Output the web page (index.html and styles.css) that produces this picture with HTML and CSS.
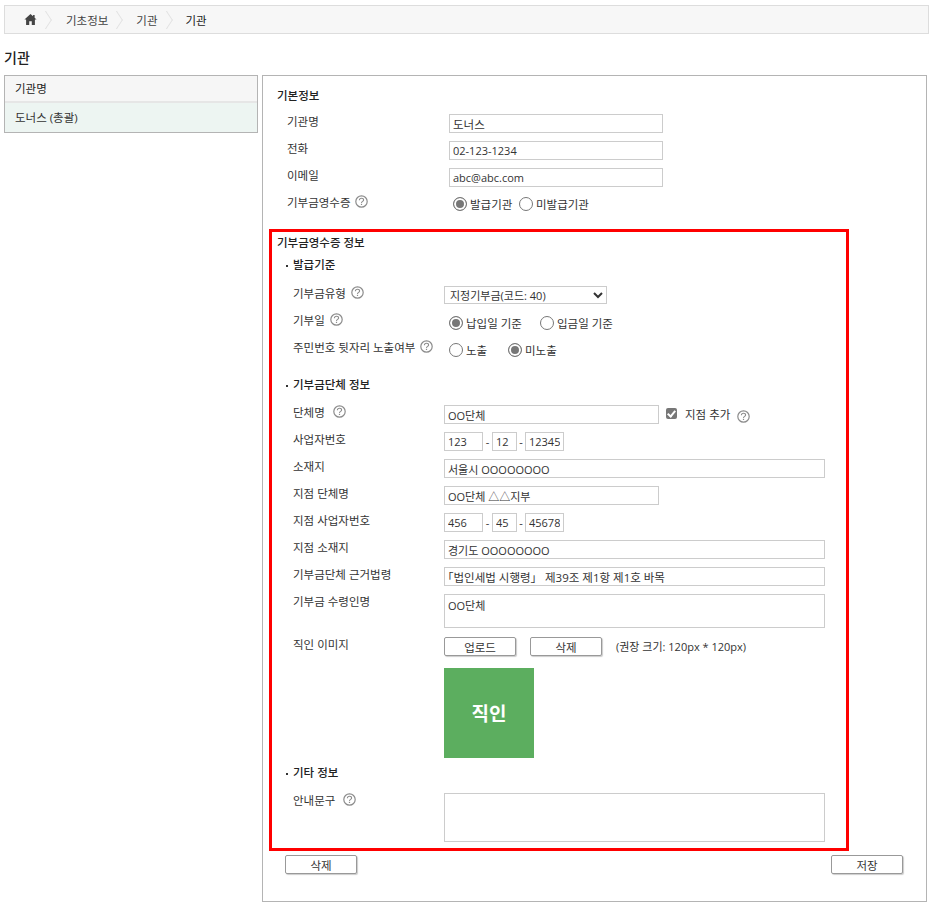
FILE: index.html
```html
<!DOCTYPE html>
<html lang="ko">
<head>
  <meta charset="UTF-8">
  <meta name="viewport" content="width=device-width, initial-scale=1.0">
  <title>기관</title>
  <link rel="stylesheet" href="styles.css">
</head>
<body>
  <svg width="0" height="0" class="defs">
    <symbol id="help" viewBox="0 0 13 13">
      <circle cx="6.5" cy="6.5" r="5.7" fill="none" stroke="#8c8c8c" stroke-width="1.2"/>
      <path d="M4.4 5.2C4.4 3.9 5.3 3.2 6.5 3.2S8.6 3.9 8.6 5C8.6 6.4 6.5 6.4 6.5 8" fill="none" stroke="#8c8c8c" stroke-width="1.1"/>
      <rect x="5.9" y="8.8" width="1.2" height="1.2" fill="#8c8c8c"/>
    </symbol>
  </svg>

  <div class="breadcrumb">
    <svg class="home" viewBox="0 0 14 12"><path d="M7 0L0.4 6H2.2V12H5.6V8H8.4V12H11.8V6H13.6L11.5 4.1V1H9.8V2.5Z" fill="#444"/></svg>
    <span class="crumb-sep"></span>
    <span class="crumb">기초정보</span>
    <span class="crumb-sep"></span>
    <span class="crumb">기관</span>
    <span class="crumb-sep"></span>
    <span class="crumb current">기관</span>
  </div>

  <h1 class="page-title">기관</h1>

  <div class="layout">
    <div class="side">
      <div class="side-head">기관명</div>
      <div class="side-item">도너스 (총괄)</div>
    </div>

    <div class="main">
      <div class="basic">
        <h2 class="sec-title">기본정보</h2>
        <div class="row">
          <div class="lbl">기관명</div>
          <input class="txt w214 ko" type="text" value="도너스">
        </div>
        <div class="row">
          <div class="lbl">전화</div>
          <input class="txt w214" type="text" value="02-123-1234">
        </div>
        <div class="row">
          <div class="lbl">이메일</div>
          <input class="txt w214" type="text" value="abc@abc.com">
        </div>
        <div class="row">
          <div class="lbl">기부금영수증 <svg class="help"><use href="#help"/></svg></div>
          <div class="radios">
            <label class="radio on tight">발급기관</label>
            <label class="radio">미발급기관</label>
          </div>
        </div>
      </div>

      <div class="receipt">
        <h2 class="sec-title">기부금영수증 정보</h2>

        <h3 class="sub-title">발급기준</h3>
        <div class="row">
          <div class="lbl">기부금유형 <svg class="help"><use href="#help"/></svg></div>
          <select class="sel"><option>지정기부금(코드: 40)</option></select>
        </div>
        <div class="row">
          <div class="lbl">기부일 <svg class="help"><use href="#help"/></svg></div>
          <div class="radios pad">
            <label class="radio on wide">납입일 기준</label>
            <label class="radio">입금일 기준</label>
          </div>
        </div>
        <div class="row">
          <div class="lbl">주민번호 뒷자리 노출여부 <svg class="help"><use href="#help"/></svg></div>
          <div class="radios pad">
            <label class="radio narrow">노출</label>
            <label class="radio on">미노출</label>
          </div>
        </div>

        <h3 class="sub-title second">기부금단체 정보</h3>
        <div class="row">
          <div class="lbl">단체명 &nbsp;<svg class="help"><use href="#help"/></svg></div>
          <input class="txt w215" type="text" value="OO단체">
          <span class="check"></span>
          <span class="check-text">지점 추가</span>
          <svg class="help"><use href="#help"/></svg>
        </div>
        <div class="row">
          <div class="lbl">사업자번호</div>
          <input class="txt w39" type="text" value="123">
          <span class="dash">-</span>
          <input class="txt w25" type="text" value="12">
          <span class="dash">-</span>
          <input class="txt w39" type="text" value="12345">
        </div>
        <div class="row">
          <div class="lbl">소재지</div>
          <input class="txt w381" type="text" value="서울시 OOOOOOOO">
        </div>
        <div class="row">
          <div class="lbl">지점 단체명</div>
          <input class="txt w215" type="text" value="OO단체 △△지부">
        </div>
        <div class="row">
          <div class="lbl">지점 사업자번호</div>
          <input class="txt w39" type="text" value="456">
          <span class="dash">-</span>
          <input class="txt w25" type="text" value="45">
          <span class="dash">-</span>
          <input class="txt w39" type="text" value="45678">
        </div>
        <div class="row">
          <div class="lbl">지점 소재지</div>
          <input class="txt w381" type="text" value="경기도 OOOOOOOO">
        </div>
        <div class="row">
          <div class="lbl">기부금단체 근거법령</div>
          <input class="txt w381 ko law" type="text" value="「법인세법 시행령」 제39조 제1항 제1호 바목">
        </div>
        <div class="row tall">
          <div class="lbl">기부금 수령인명</div>
          <textarea class="area h34">OO단체</textarea>
        </div>
        <div class="row btns">
          <div class="lbl">직인 이미지</div>
          <button class="btn" type="button">업로드</button>
          <button class="btn gap" type="button">삭제</button>
          <span class="hint">(권장 크기: 120px * 120px)</span>
        </div>
        <div class="stamp">직인</div>

        <h3 class="sub-title third">기타 정보</h3>
        <div class="row tall last">
          <div class="lbl">안내문구 &nbsp;<svg class="help"><use href="#help"/></svg></div>
          <textarea class="area h49"></textarea>
        </div>
      </div>

      <div class="actions">
        <button class="btn" type="button">삭제</button>
        <button class="btn" type="button">저장</button>
      </div>
    </div>
  </div>
</body>
</html>
```

FILE: styles.css
```css
* {
  box-sizing: border-box;
}

body {
  margin: 0;
  padding: 5px 3px 0 4px;
  background: #fff;
  color: #333;
  font-family: "Open Sans", "Noto Sans CJK KR", sans-serif;
  font-size: 11.5px;
}

.defs {
  position: absolute;
}

.breadcrumb {
  height: 29px;
  display: flex;
  align-items: center;
  padding-left: 19px;
  background: #f7f7f7;
  border: 1px solid #ddd;
}

.home {
  width: 13px;
  height: 11px;
}

.crumb {
  color: #444;
}

.crumb.current {
  color: #222;
}

.crumb-sep {
  width: 18px;
  height: 18px;
  margin: 0 7px 0 4px;
  position: relative;
  overflow: hidden;
  flex: none;
}

.crumb + .crumb-sep {
  margin-right: 6px;
}

.crumb-sep::after {
  content: "";
  position: absolute;
  left: -4px;
  top: 2px;
  width: 13px;
  height: 13px;
  border-top: 1px solid #e2e2e2;
  border-right: 1px solid #e2e2e2;
  transform: rotate(45deg) skew(12deg, 12deg);
}

.page-title {
  margin: 15px 0 8px;
  height: 18px;
  line-height: 18px;
  font-size: 14px;
  font-weight: 500;
  color: #222;
}

.layout {
  display: flex;
  align-items: flex-start;
  gap: 4px;
}

.side {
  width: 254px;
  border: 1px solid #b4b4b4;
}

.side-head {
  height: 27px;
  line-height: 25px;
  padding-left: 10px;
  background: #f6f6f6;
  border-bottom: 2px solid #e6e6e6;
  color: #222;
}

.side-item {
  height: 29px;
  line-height: 29px;
  padding-left: 10px;
  background: #edf5f2;
}

.main {
  width: 665px;
  height: 827px;
  border: 1px solid #b4b4b4;
  padding: 11px 23px 0 6px;
}

.basic {
  padding-left: 8px;
}

.sec-title {
  margin: 0;
  height: 18px;
  line-height: 18px;
  font-size: 11.5px;
  font-weight: 500;
  color: #222;
}

.receipt .sec-title {
  margin-bottom: 1px;
}

.row {
  display: flex;
  align-items: flex-start;
  height: 27px;
}

.basic .row {
  padding-left: 10px;
}

.basic .sec-title {
  margin-bottom: 9px;
}

.lbl {
  width: 151px;
  height: 19px;
  margin-top: -3px;
  display: flex;
  align-items: center;
  gap: 2px;
  white-space: pre-wrap;
  flex: none;
}

.basic .lbl {
  width: 162px;
}

.help {
  width: 13px;
  height: 13px;
  flex: none;
}

.txt {
  height: 19px;
  padding: 0 3px;
  border: 1px solid #ccc;
  background: #fff;
  color: #333;
  font: inherit;
  font-size: 11px;
  outline: none;
}

.txt.ko {
  font-size: 11.5px;
}

.txt.law {
  padding-left: 0;
  text-indent: -3px;
}

.w214 {
  width: 214px;
}

.w215 {
  width: 215px;
}

.w39 {
  width: 39px;
}

.w25 {
  width: 25px;
}

.w381 {
  width: 381px;
}

.sel {
  width: 163px;
  height: 18px;
  padding: 0 0 0 1px;
  border: 1px solid #ccc;
  background: #fff;
  color: #333;
  font: inherit;
  font-size: 11px;
}

.radios {
  display: flex;
  align-items: center;
  height: 19px;
}

.basic .radios {
  margin-top: -1px;
  padding-left: 4px;
}

.radios.pad {
  padding-left: 5px;
}

.radio {
  display: flex;
  align-items: center;
  gap: 3px;
}

.radio::before {
  content: "";
  width: 12px;
  height: 12px;
  border: 1px solid #777;
  border-radius: 50%;
  background: #fff;
  flex: none;
}

.radio.on::before {
  background: #777;
  box-shadow: inset 0 0 0 2px #fff;
}

.radio.tight {
  width: 66px;
}

.radio.wide {
  width: 91px;
}

.radio.narrow {
  width: 59px;
}

.receipt {
  width: 580px;
  height: 622px;
  margin-top: 7px;
  padding: 2px 0 0 5px;
  border: 3px solid #f00;
}

.sub-title {
  margin: 6px 0 14px 9px;
  height: 14px;
  line-height: 14px;
  font-size: 11.5px;
  font-weight: 500;
  color: #222;
}

.sub-title::before {
  content: "";
  display: inline-block;
  width: 2px;
  height: 2px;
  margin: 0 5px 2px 0;
  background: #333;
}

.sub-title.second {
  margin-top: 11px;
  margin-bottom: 13px;
}

.sub-title.third {
  margin-top: 8px;
  margin-bottom: 13px;
}

.receipt .row {
  padding-left: 16px;
}

.dash {
  width: 9px;
  font-size: 11px;
  text-align: center;
  line-height: 19px;
}

.dash + .w25 + .dash {
  width: 8px;
}

.check {
  width: 11px;
  height: 11px;
  margin: 3px 8px 0 7px;
  border-radius: 2px;
  background: #777;
  position: relative;
  flex: none;
}

.check::after {
  content: "";
  position: absolute;
  left: 3px;
  top: 1px;
  width: 3px;
  height: 6px;
  border-right: 2px solid #fff;
  border-bottom: 2px solid #fff;
  transform: rotate(40deg);
}

.check-text {
  line-height: 19px;
  margin-right: 7px;
}

.row .check-text + .help {
  margin-top: 5px;
}

.area {
  width: 381px;
  padding: 2px 3px;
  border: 1px solid #ccc;
  background: #fff;
  color: #333;
  font: inherit;
  font-size: 11px;
  resize: none;
  outline: none;
}

.h34 {
  height: 34px;
}

.h49 {
  height: 49px;
}

.row.tall {
  height: 43px;
}

.row.last {
  height: 49px;
}

.btn {
  width: 72px;
  height: 19px;
  padding: 0;
  border: 1px solid #999;
  border-radius: 2px;
  background: #fff;
  box-shadow: 1px 1px 1px #ccc;
  color: #333;
  font: inherit;
}

.btn.gap {
  margin-left: 14px;
}

.hint {
  margin-left: 14px;
  font-size: 11px;
  line-height: 19px;
}

.row.btns {
  height: 31px;
}

.stamp {
  width: 90px;
  height: 90px;
  margin-left: 167px;
  display: flex;
  align-items: center;
  justify-content: center;
  background: #5cae5f;
  color: #fff;
  font-size: 19px;
  font-weight: 700;
}

.actions {
  display: flex;
  justify-content: space-between;
  width: 618px;
  margin: 4px 0 0 16px;
}
```
